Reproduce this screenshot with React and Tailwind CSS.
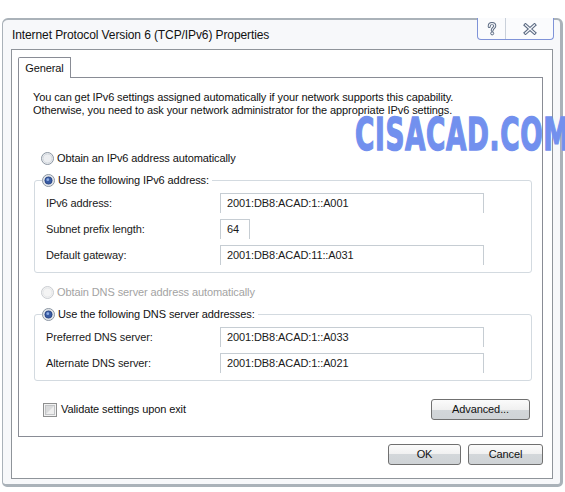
import React from "react";

function Radio({ checked = false, disabled = false }) {
  return (
    <svg width="13" height="13" viewBox="0 0 13 13" className="shrink-0">
      <circle cx="6.5" cy="6.5" r="6" fill={disabled ? "#f4f4f4" : "#eceef1"} stroke={disabled ? "#c9ccd0" : "#8b95a1"} />
      <circle cx="6.5" cy="6.5" r="4.5" fill="none" stroke={disabled ? "#e6e8ea" : "#d3d8de"} />
      {checked && <circle cx="6.5" cy="6.5" r="3.6" fill="#3a5ca3" stroke="#1d3a7c" strokeWidth="0.8" />}
      {checked && <circle cx="5.8" cy="5.7" r="1.4" fill="#90afe6" />}
    </svg>
  );
}

function Checkbox() {
  return (
    <svg width="14" height="14" viewBox="0 0 14 14" className="shrink-0">
      <rect x="0.5" y="0.5" width="13" height="13" fill="#f2f2f2" stroke="#8e8f8f" />
      <rect x="2.5" y="2.5" width="9" height="9" fill="#d9dadb" stroke="#c2c4c6" />
      <path d="M3 11 L11 3 L11 11 Z" fill="#eeeeee" />
    </svg>
  );
}

function Field({ label, value, w = "w-[264px]" }) {
  return (
    <div className="flex items-center h-[20px]">
      <div className="w-[185px] pl-[11px] text-[#1a1a1a]">{label}</div>
      <div className={`${w} h-[20px] border-t border-l border-r border-[#c6cdd3] bg-white pl-[6px] flex items-center text-[#1a1a1a]`}>
        {value}
      </div>
    </div>
  );
}

function Button({ children, w }) {
  return (
    <div
      className={`${w} h-[21px] rounded-[3px] border border-[#707070] flex items-center justify-center text-[#111] bg-[linear-gradient(to_bottom,#fbfbfb_0%,#f0f0f0_50%,#d3d7da_50%,#cfd3d6_100%)]`}
    >
      {children}
    </div>
  );
}

export default function App() {
  return (
    <div className="relative w-[565px] h-[492px] bg-white overflow-hidden font-['Liberation_Sans',Arial,sans-serif] text-[11px] leading-[13px] tracking-[-0.1px]">
      {/* window */}
      <div className="mt-[18px] ml-[2px] w-[561px] h-[469px] bg-[#f7f8fa] border-l border-t-2 border-r-[3px] border-b-[3px] border-[#aab2b9] rounded-t-[6px] rounded-b-[5px] flex flex-col">
        {/* title row */}
        <div className="h-[29px] flex items-start justify-between shrink-0">
          <div className="pl-[9px] pt-[8px] text-[12px] leading-[14px] text-[#111]">
            Internet Protocol Version 6 (TCP/IPv6) Properties
          </div>
          <div className="-mt-[2px] mr-[6px] h-[22px] flex border-l border-r border-b border-[#7f93d8] rounded-b-[4px] bg-[#fafbfd]">
            <div className="w-[28px] h-full flex items-center justify-center border-r border-[#c9d0da]">
              <svg width="10" height="14" viewBox="0 0 10 14">
                <path d="M2.2 4.5 C2.2 2.3 3.5 1.6 5 1.6 C6.7 1.6 7.8 2.6 7.8 4.1 C7.8 5.8 5.2 6.2 5.2 8.3" fill="none" stroke="#5b6a82" strokeWidth="3" strokeLinecap="round" />
                <path d="M2.2 4.5 C2.2 2.3 3.5 1.6 5 1.6 C6.7 1.6 7.8 2.6 7.8 4.1 C7.8 5.8 5.2 6.2 5.2 8.3" fill="none" stroke="#f4f6fa" strokeWidth="1.1" strokeLinecap="round" />
                <circle cx="5.2" cy="11.4" r="1.5" fill="#f4f6fa" stroke="#5b6a82" strokeWidth="1" />
              </svg>
            </div>
            <div className="w-[47px] h-full flex items-center justify-center">
              <svg width="14" height="12" viewBox="0 0 14 12">
                <path d="M2.5 2 L11.5 10 M11.5 2 L2.5 10" fill="none" stroke="#5b6a82" strokeWidth="3.4" strokeLinecap="square" />
                <path d="M2.5 2 L11.5 10 M11.5 2 L2.5 10" fill="none" stroke="#f4f6fa" strokeWidth="1.3" strokeLinecap="square" />
              </svg>
            </div>
          </div>
        </div>

        {/* client area */}
        <div className="ml-[8px] w-[542px] h-[430px] border border-[#8f949a] bg-white flex flex-col pl-[6px] pt-[7px]">
          {/* tab */}
          <div className="relative z-10 -mb-px w-[53px] h-[21px] border-t border-l border-r border-[#898c95] rounded-tl-[2px] bg-white flex items-center justify-center text-[#111]">
            General
          </div>
          {/* panel */}
          <div className="w-[525px] h-[360px] border border-[#898c95] bg-white flex flex-col">
            <div className="mt-[13px] pl-[14px] text-[#111]">
              <div>You can get IPv6 settings assigned automatically if your network supports this capability.</div>
              <div>Otherwise, you need to ask your network administrator for the appropriate IPv6 settings.</div>
            </div>

            <div className="mt-[33px] pl-[22px] h-[16px] flex items-center gap-[3px] text-[#111]">
              <Radio />
              <span>Obtain an IPv6 address automatically</span>
            </div>

            <fieldset className="mt-[6px] ml-[15px] w-[498px] border border-[#d3dae0] rounded-[3px] pb-[7px]">
              <legend className="ml-[7px] pr-[3px] h-[16px] flex items-center gap-[3px] text-[#111]">
                <Radio checked />
                <span>Use the following IPv6 address:</span>
              </legend>
              <div className="mt-[5px] flex flex-col gap-[6px]">
                <Field label="IPv6 address:" value="2001:DB8:ACAD:1::A001" />
                <Field label="Subnet prefix length:" value="64" w="w-[30px]" />
                <Field label="Default gateway:" value="2001:DB8:ACAD:11::A031" />
              </div>
            </fieldset>

            <div className="mt-[11px] pl-[22px] h-[16px] flex items-center gap-[3px] text-[#a3a3a3]">
              <Radio disabled />
              <span>Obtain DNS server address automatically</span>
            </div>

            <fieldset className="mt-[6px] ml-[15px] w-[498px] border border-[#d3dae0] rounded-[3px] pb-[7px]">
              <legend className="ml-[7px] pr-[3px] h-[16px] flex items-center gap-[3px] text-[#111]">
                <Radio checked />
                <span>Use the following DNS server addresses:</span>
              </legend>
              <div className="mt-[5px] flex flex-col gap-[6px]">
                <Field label="Preferred DNS server:" value="2001:DB8:ACAD:1::A033" />
                <Field label="Alternate DNS server:" value="2001:DB8:ACAD:1::A021" />
              </div>
            </fieldset>

            <div className="mt-[18px] pl-[24px] pr-[12px] h-[21px] flex items-center justify-between">
              <div className="flex items-center gap-[4px] text-[#111]">
                <Checkbox />
                <span>Validate settings upon exit</span>
              </div>
              <Button w="w-[99px]">Advanced...</Button>
            </div>
          </div>

          {/* OK / Cancel */}
          <div className="mt-[7px] w-[525px] flex justify-end gap-[7px]">
            <Button w="w-[73px]">OK</Button>
            <Button w="w-[75px]">Cancel</Button>
          </div>
        </div>
      </div>

      {/* watermark */}
      <div className="absolute left-[355px] top-[115px] w-[370px] origin-top-left scale-x-[0.6] text-[44px] leading-[40px] tracking-[1px] font-bold text-[#7290ee] [-webkit-text-stroke:1.5px_#7290ee] font-['DejaVu_Sans',sans-serif] whitespace-nowrap">
        CISACAD.COM
      </div>
    </div>
  );
}
